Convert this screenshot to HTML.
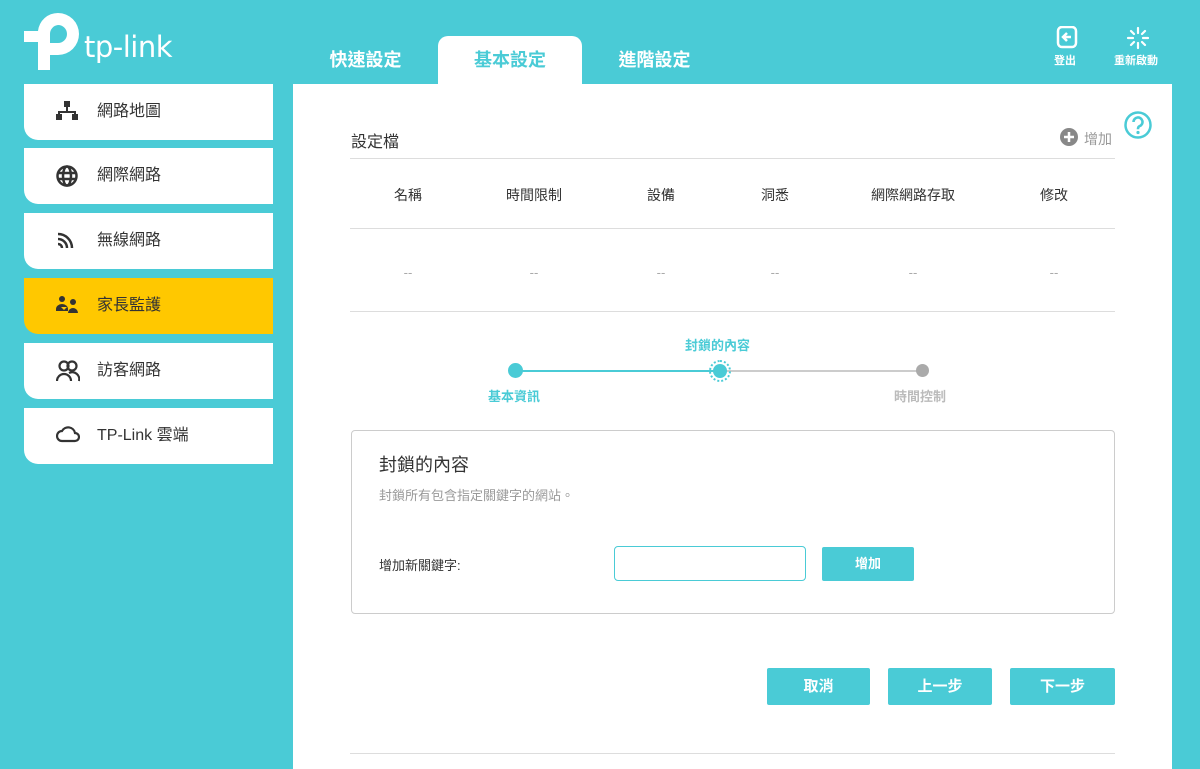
<!DOCTYPE html>
<html><head><meta charset="utf-8"><style>
*{margin:0;padding:0;box-sizing:border-box}
body{width:1200px;height:769px;overflow:hidden;background:#4acbd6;font-family:"Liberation Sans","Noto Sans CJK TC",sans-serif;position:relative;color:#333}
.abs{position:absolute}
.side{position:absolute;left:24px;width:249px;height:56px;background:#fff;border-radius:0 0 0 14px;font-size:16px;color:#333}
.side svg{position:absolute;left:32px;top:17px}
.side span{position:absolute;left:73px;top:17px;line-height:22px}
.tab{position:absolute;top:36px;height:48px;font-size:18px;color:#fff;font-weight:bold;text-align:center;line-height:48px}
.main{position:absolute;left:293px;top:84px;width:879px;height:685px;background:#fff}
.th{position:absolute;top:101px;font-size:14px;color:#333;transform:translateX(-50%)}
.td{position:absolute;top:181px;font-size:13px;color:#aaa;transform:translateX(-50%)}
.btn{position:absolute;top:584px;height:37px;background:#4acbd6;color:#fff;font-size:15px;font-weight:bold;text-align:center;line-height:37px;border-radius:2px}
</style></head><body>
<svg class="abs" style="left:0;top:0" width="190" height="80" viewBox="0 0 190 80">
<path fill-rule="evenodd" fill="#fff" d="M58 13a21 21 0 0 1 0 42h-8v15h-12v-28h-14v-11h14v-0a20 20 0 0 1 20-18zM58 25a9 9 0 0 0-8 9v9h8a9 9 0 0 0 0-18z"/>
<text x="84" y="57" font-family="DejaVu Sans" font-size="29" fill="#fff" letter-spacing="-0.5">tp-link</text>
</svg>
<div class="tab" style="left:293px;width:145px">快速設定</div>
<div class="tab" style="left:438px;width:144px;background:#fff;color:#4acbd6;border-radius:10px 10px 0 0">基本設定</div>
<div class="tab" style="left:582px;width:145px">進階設定</div>
<svg class="abs" style="left:1056px;top:26px" width="22" height="24" viewBox="0 0 22 24"><rect x="2" y="1" width="18" height="20" rx="4" fill="none" stroke="#fff" stroke-width="2.5"/><path d="M11 7l-4 4 4 4M7 11h8" stroke="#fff" stroke-width="2.5" fill="none"/></svg>
<div class="abs" style="left:1054px;top:52px;font-size:11px;color:#fff;font-weight:bold">登出</div>
<svg class="abs" style="left:1126px;top:26px" width="24" height="24" viewBox="0 0 24 24" stroke="#fff" stroke-width="2.2" stroke-linecap="round"><path d="M12 2v5M12 17v5M2 12h5M17 12h5M5 5l3 3M16 16l3 3M19 5l-3 3M5 19l3-3"/></svg>
<div class="abs" style="left:1114px;top:52px;font-size:11px;color:#fff;font-weight:bold">重新啟動</div>

<div class="side" style="top:84px"><svg width="22" height="20" viewBox="0 0 22 20" fill="#333"><rect x="8" y="0" width="6" height="6"/><rect x="0" y="13" width="6" height="6"/><rect x="16" y="13" width="6" height="6"/><path d="M10 6h2v4h8v4h-2v-2H4v2H2v-4h8z"/></svg><span>網路地圖</span></div>
<div class="side" style="top:148px"><svg width="22" height="22" viewBox="0 0 22 22" fill="none" stroke="#333" stroke-width="2.5"><circle cx="11" cy="11" r="9.5"/><ellipse cx="11" cy="11" rx="4" ry="9.5"/><path d="M2 8h18M2 14h18"/></svg><span>網際網路</span></div>
<div class="side" style="top:213px"><svg width="20" height="20" viewBox="0 0 20 20" fill="none" stroke="#333" stroke-width="2.5"><path d="M2 4a14 14 0 0 1 14 14M2 9a9 9 0 0 1 9 9M2 14a4 4 0 0 1 4 4"/></svg><span>無線網路</span></div>
<div class="side" style="top:278px;background:#ffc800"><svg width="24" height="20" viewBox="0 0 24 20" fill="#333"><circle cx="6" cy="4" r="3"/><circle cx="17" cy="7" r="3"/><path d="M0 14a6 5 0 0 1 12 0v2H0zM12 18a5 5 0 0 1 10 0z"/><path d="M5 12l3 3 3-3" fill="#ffc800"/></svg><span>家長監護</span></div>
<div class="side" style="top:343px"><svg width="24" height="22" viewBox="0 0 24 22" fill="none" stroke="#333" stroke-width="2.2"><circle cx="8" cy="6" r="4.5"/><circle cx="16" cy="6" r="4.5"/><path d="M1 21a7 7 0 0 1 14 0M13 13a7 7 0 0 1 10 8"/></svg><span>訪客網路</span></div>
<div class="side" style="top:408px"><svg width="24" height="18" viewBox="0 0 24 18" fill="none" stroke="#333" stroke-width="2.2"><path d="M6 16a5 5 0 0 1 0-10a7 7 0 0 1 13 2a4 4 0 0 1 0 8z"/></svg><span>TP-Link 雲端</span></div>

<div class="main">
<div class="abs" style="left:58px;top:44px;font-size:16px;color:#333">設定檔</div>
<svg class="abs" style="left:767px;top:44px" width="18" height="18" viewBox="0 0 18 18"><circle cx="9" cy="9" r="9" fill="#888"/><path d="M9 4v10M4 9h10" stroke="#fff" stroke-width="2.5"/></svg>
<div class="abs" style="left:791px;top:45px;font-size:14px;color:#999">增加</div>
<svg class="abs" style="left:830px;top:26px" width="30" height="30" viewBox="0 0 30 30"><circle cx="15" cy="15" r="12.5" fill="none" stroke="#4acbd6" stroke-width="2.5"/><path d="M10.5 12a4.5 4.5 0 1 1 6 4.2c-1.3.6-1.5 1.3-1.5 3" fill="none" stroke="#4acbd6" stroke-width="2.6"/><circle cx="15" cy="22.5" r="1.6" fill="#4acbd6"/></svg>
<div class="abs" style="left:57px;top:74px;width:765px;height:1px;background:#ddd"></div>
<div class="th" style="left:115px">名稱</div><div class="th" style="left:241px">時間限制</div><div class="th" style="left:368px">設備</div><div class="th" style="left:482px">洞悉</div><div class="th" style="left:620px">網際網路存取</div><div class="th" style="left:761px">修改</div>
<div class="abs" style="left:57px;top:144px;width:765px;height:1px;background:#ddd"></div>
<div class="td" style="left:115px">--</div><div class="td" style="left:241px">--</div><div class="td" style="left:368px">--</div><div class="td" style="left:482px">--</div><div class="td" style="left:620px">--</div><div class="td" style="left:761px">--</div>
<div class="abs" style="left:57px;top:227px;width:765px;height:1px;background:#ddd"></div>

<div class="abs" style="left:222px;top:286px;width:205px;height:2px;background:#4acbd6"></div>
<div class="abs" style="left:427px;top:286px;width:203px;height:2px;background:#ccc"></div>
<div class="abs" style="left:215px;top:279px;width:15px;height:15px;border-radius:50%;background:#4acbd6"></div>
<div class="abs" style="left:416px;top:276px;width:22px;height:22px;border-radius:50%;border:2px dotted #4acbd6"></div>
<div class="abs" style="left:420px;top:280px;width:14px;height:14px;border-radius:50%;background:#4acbd6"></div>
<div class="abs" style="left:623px;top:280px;width:13px;height:13px;border-radius:50%;background:#aaa"></div>
<div class="abs" style="left:392px;top:251px;font-size:13px;color:#4acbd6;font-weight:bold">封鎖的內容</div>
<div class="abs" style="left:195px;top:302px;font-size:13px;color:#4acbd6;font-weight:bold">基本資訊</div>
<div class="abs" style="left:601px;top:302px;font-size:13px;color:#bbb;font-weight:bold">時間控制</div>

<div class="abs" style="left:58px;top:346px;width:764px;height:184px;border:1px solid #ccc;border-radius:4px"></div>
<div class="abs" style="left:86px;top:367px;font-size:18px;color:#333">封鎖的內容</div>
<div class="abs" style="left:86px;top:401px;font-size:13px;color:#999">封鎖所有包含指定關鍵字的網站。</div>
<div class="abs" style="left:86px;top:471px;font-size:13px;color:#333">增加新關鍵字:</div>
<div class="abs" style="left:321px;top:462px;width:192px;height:35px;border:1px solid #4acbd6;border-radius:4px"></div>
<div class="abs" style="left:529px;top:463px;width:92px;height:34px;background:#4acbd6;border-radius:2px;color:#fff;font-size:13px;font-weight:bold;text-align:center;line-height:34px">增加</div>

<div class="btn" style="left:474px;width:103px">取消</div>
<div class="btn" style="left:595px;width:104px">上一步</div>
<div class="btn" style="left:717px;width:105px">下一步</div>
<div class="abs" style="left:57px;top:669px;width:765px;height:1px;background:#ddd"></div>
</div>
</body></html>
